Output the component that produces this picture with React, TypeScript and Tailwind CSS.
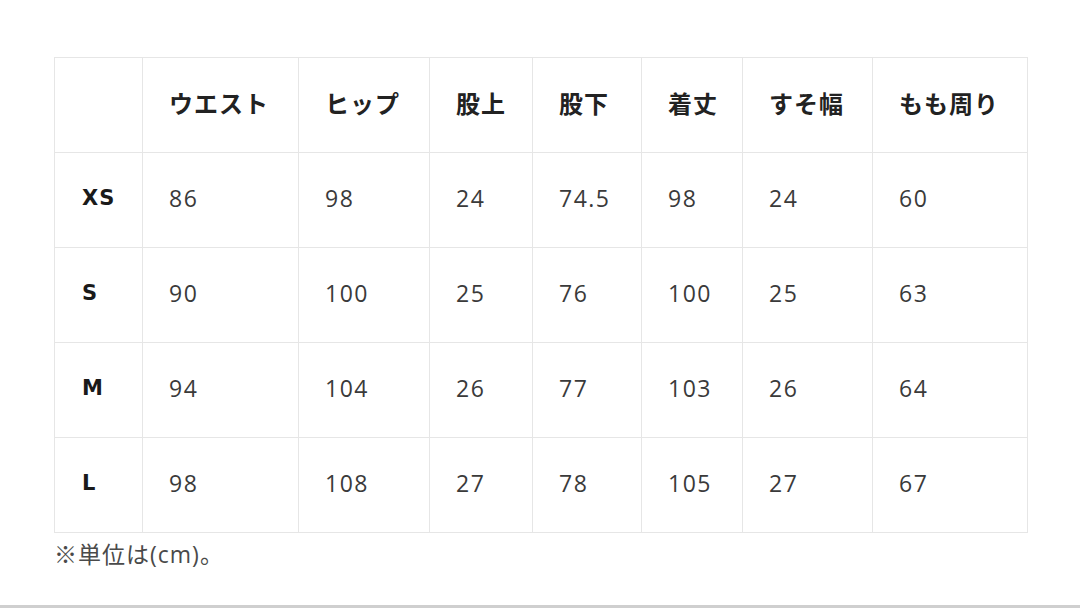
const headers = ["ウエスト", "ヒップ", "股上", "股下", "着丈", "すそ幅", "もも周り"];

const rows: { size: string; values: string[] }[] = [
  { size: "XS", values: ["86", "98", "24", "74.5", "98", "24", "60"] },
  { size: "S", values: ["90", "100", "25", "76", "100", "25", "63"] },
  { size: "M", values: ["94", "104", "26", "77", "103", "26", "64"] },
  { size: "L", values: ["98", "108", "27", "78", "105", "27", "67"] },
];

const widths = ["w-[88px]", "w-[156px]", "w-[131px]", "w-[103px]", "w-[109px]", "w-[101px]", "w-[130px]", "w-[155px]"];

export default function App() {
  return (
    <div className="flex h-[608px] w-[1080px] flex-col bg-white">
      <div className="flex-1 pl-[54px] pt-[57px]">
        <table className="table-fixed border-collapse">
          <colgroup>
            {widths.map((w, i) => (
              <col key={i} className={w} />
            ))}
          </colgroup>
          <thead>
            <tr className="h-[95px]">
              <th className="border border-[#e6e6e6]" />
              {headers.map((h) => (
                <th
                  key={h}
                  className="border border-[#e6e6e6] pb-[5px] pl-[26px] text-left text-[24px] font-bold tracking-[1px] text-[#222] [font-family:'Noto_Sans_CJK_JP',sans-serif]"
                >
                  {h}
                </th>
              ))}
            </tr>
          </thead>
          <tbody>
            {rows.map((r) => (
              <tr key={r.size} className="h-[95px]">
                <td className="border border-[#e6e6e6] pb-[3px] pl-[27px] text-[21px] font-bold tracking-[1px] text-[#1a1a1a] [font-family:'DejaVu_Sans',sans-serif]">
                  {r.size}
                </td>
                {r.values.map((v, i) => (
                  <td
                    key={i}
                    className="border border-[#e6e6e6] pb-[3px] pl-[26px] text-[23px] tracking-[1.5px] text-[#3a3a3a] [font-family:'Open_Sans',sans-serif]"
                  >
                    {v}
                  </td>
                ))}
              </tr>
            ))}
          </tbody>
        </table>
        <p className="mt-[5px] text-[23px] leading-[32px] tracking-[1px] text-[#4a4a4a] [font-family:'Open_Sans','Noto_Sans_CJK_JP',sans-serif]">
          ※単位は(cm)。
        </p>
      </div>
      <div className="h-[3px] bg-[#cfcfcf]" />
    </div>
  );
}
